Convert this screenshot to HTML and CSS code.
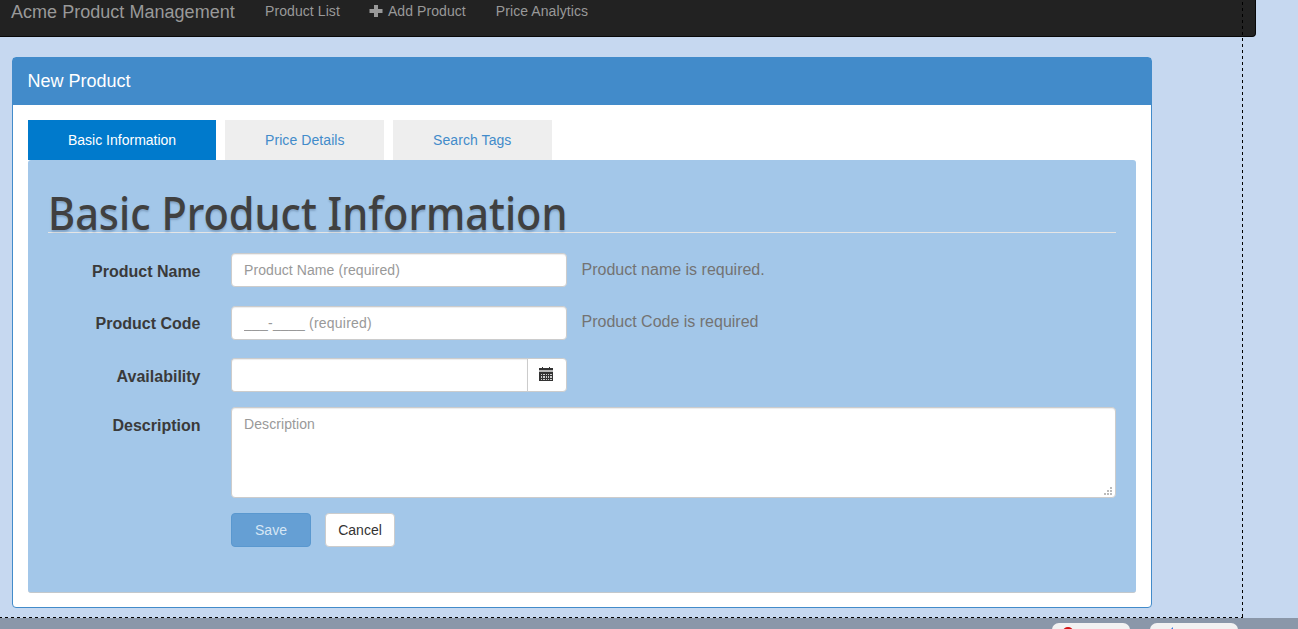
FILE: index.html
```html
<!DOCTYPE html>
<html lang="en">
<head>
<meta charset="utf-8">
<title>Acme Product Management</title>
<link rel="stylesheet" href="styles.css">
</head>
<body>
<div class="page">
  <nav class="navbar">
    <a class="brand">Acme Product Management</a>
    <a class="nav-link nav-list">Product List</a>
    <a class="nav-link nav-add"><svg class="plus" viewBox="0 0 14 14"><path d="M5 1h4v4h4.500v4H9v4H5V9H.5V5H5z"/></svg>Add Product</a>
    <a class="nav-link">Price Analytics</a>
  </nav>
  <main class="panel">
    <header class="panel-heading">New Product</header>
    <div class="panel-body">
      <div class="tabs">
        <a class="tab active">Basic Information</a>
        <a class="tab">Price Details</a>
        <a class="tab">Search Tags</a>
      </div>
      <form class="well">
        <h1 class="legend"><span class="legend-text">Basic Product Information</span></h1>
        <div class="row">
          <label class="label">Product Name</label>
          <input class="control" type="text" placeholder="Product Name (required)">
          <span class="help">Product name is required.</span>
        </div>
        <div class="row row-code">
          <label class="label">Product Code</label>
          <input class="control" type="text" placeholder="___-____ (required)">
          <span class="help">Product Code is required</span>
        </div>
        <div class="row row-date">
          <label class="label">Availability</label>
          <div class="group">
            <input class="control date" type="text">
            <button class="addon" type="button"><svg class="calendar" viewBox="0 0 14 14" shape-rendering="crispEdges"><path d="M3 0h1v1h6V0h1v1h3v2H0V1h3z"/><path class="band" d="M0 3h14v2H0z"/><path d="M0 5h14v9H0z"/><path class="cells" d="M2 7h1v1H2zM4 7h2v1H4zM7 7h1v1H7zM9 7h1v1H9zM11 7h2v1h-2zM2 9h1v2H2zM4 9h2v2H4zM7 9h1v2H7zM9 9h1v2H9zM11 9h2v2h-2zM2 12h1v1H2zM4 12h2v1H4zM7 12h1v1H7zM9 12h1v1H9zM11 12h2v1h-2z"/></svg></button>
          </div>
        </div>
        <div class="row row-desc">
          <label class="label">Description</label>
          <div class="area-wrap">
            <textarea class="control area" placeholder="Description"></textarea>
            <svg class="grip" viewBox="0 0 8 8"><path d="M6 0h2v2H6zM3 3h2v2H3zM6 3h2v2H6zM0 6h2v2H0zM3 6h2v2H3zM6 6h2v2H6z"/></svg>
          </div>
        </div>
        <div class="actions">
          <button class="btn save" type="button">Save</button>
          <button class="btn cancel" type="button">Cancel</button>
        </div>
      </form>
    </div>
  </main>
  <div class="guide"></div>
</div>
<footer class="toolbar">
  <div class="tool tool-a"><svg class="tool-icon" viewBox="0 0 10 4"><path fill="#d31313" d="M0 4a5 4 0 0 1 10 0z"/></svg></div>
  <div class="tool tool-b"><svg class="tool-icon" viewBox="0 0 10 4"><path fill="#3b7de0" d="M3 4l1-2 2-2v4z"/></svg></div>
</footer>
</body>
</html>
```
FILE: styles.css
```css
* { box-sizing: border-box; }
body {
  margin: 0;
  width: 1298px;
  height: 629px;
  overflow: hidden;
  background: #c6d8f0;
  color: #333;
  font: 14px/20px "Liberation Sans", Arial, sans-serif;
}
.page { position: relative; height: 618px; }
.navbar {
  display: flex;
  align-items: flex-start;
  width: 1256px;
  height: 37px;
  padding-left: 11px;
  background: #222;
  border: solid #080808;
  border-width: 0 1px 1px 0;
  border-radius: 0 0 4px 0;
  color: #999;
}
.brand { width: 254px; padding-top: 2px; font-size: 18px; white-space: nowrap; letter-spacing: .03px; }
.nav-link { padding-top: 1px; margin-right: 30px; white-space: nowrap; letter-spacing: .08px; }
.nav-list { margin-right: 29px; }
.plus { width: 14px; height: 14px; margin: 0 5px -1.500px 0; fill: #999; }
.panel {
  width: 1140px;
  height: 551px;
  margin: 20px 0 0 12px;
  background: #fff;
  border: 1px solid #428bca;
  border-radius: 4px;
}
.panel-heading {
  height: 47px;
  padding: 13px 14.500px;
  background: #428bca;
  color: #fff;
  font-size: 18px;
  line-height: 20px;
}
.panel-body { padding: 15px; }
.tabs { display: flex; gap: 9px; }
.tab {
  height: 40px;
  padding: 0 40px;
  background: #eee;
  color: #428bca;
  line-height: 40px;
  width: 159px;
  white-space: nowrap;
  letter-spacing: .08px;
}
.tab.active { width: 188px; background: #007acc; color: #fff; letter-spacing: 0; }
.well {
  height: 433px;
  padding: 20px;
  background: #a3c7e9;
  border-bottom: 1px solid #c3c8cc;
  border-radius: 3px;
}
.legend {
  height: 53px;
  margin: 0 0 20px;
  border-bottom: 1px solid #e5e5e5;
  color: #404040;
  font: 500 45px/66px "Comic Sans MS", "Noto Sans", sans-serif;
  text-shadow: 0 2px 2px rgba(80, 110, 145, .4);
  white-space: nowrap;
}
.legend-text { display: inline-block; transform: scaleX(.922); transform-origin: 0 0; }
.row { display: flex; height: 34px; margin-bottom: 19px; }
.row-code { margin-bottom: 18px; }
.row-date { margin-bottom: 15px; }
.row-desc { height: 91px; margin-bottom: 15px; }
.label {
  width: 152.500px;
  margin-right: 30.500px;
  padding-top: 9px;
  text-align: right;
  font-size: 16px;
  font-weight: bold;
  color: #3a3a3a;
}
.row-code .label { padding-top: 8px; }
.control {
  width: 336px;
  height: 34px;
  margin: 0;
  padding: 6px 12px;
  border: 1px solid #ccc;
  border-radius: 4px;
  background: #fff;
  box-shadow: inset 0 1px 1px rgba(0, 0, 0, .075);
  font: inherit;
  outline: 0;
}
.control::placeholder { color: #999; opacity: 1; letter-spacing: .08px; }
.row-code .control::placeholder { letter-spacing: .22px; }
.help { margin-left: 14.500px; padding-top: 7px; font-size: 16px; color: #737373; }
.row-code .help { padding-top: 6px; }
.group { display: flex; }
.date { width: 296px; border-radius: 4px 0 0 4px; border-right: 0; }
.addon {
  width: 40px;
  padding: 0 2px 2px 0;
  border: 1px solid #ccc;
  border-radius: 0 4px 4px 0;
  background: #fff;
}
.calendar { display: block; width: 14px; height: 14px; margin: 0 auto; fill: #333; }
.band { fill: #b8b8b8; }
.cells { fill: #ccc; }
.area-wrap { position: relative; }
.area { display: block; width: 885px; height: 91px; resize: none; }
.grip { position: absolute; right: 4px; bottom: 3px; width: 8px; height: 8px; fill: #bbb; }
.actions { display: flex; gap: 14px; margin-left: 183px; }
.btn { height: 34px; padding: 0; border: 1px solid #ccc; border-radius: 4px; background: #fff; color: #333; font: inherit; }
.save { width: 80px; background: #659fd4; border-color: #5a98cf; color: #d6e6f4; }
.cancel { width: 70px; }
.guide {
  position: absolute;
  top: 0;
  left: 0;
  width: 1243px;
  height: 618px;
  background:
    repeating-linear-gradient(90deg, #000 0 2px, #0000 2px 5px, #000 5px 6px) 0 100% / 100% 1px no-repeat,
    repeating-linear-gradient(#0000 0 2px, #000 2px 5px, #0000 5px 6px) 100% 0 / 1px 100% no-repeat;
  pointer-events: none;
}
.toolbar { display: flex; height: 11px; padding: 5px 0 0 1052px; gap: 20px; background: #8a97a9; overflow: hidden; }
.tool { height: 20px; border-radius: 7px; background: #f2f2f2; }
.tool-a { width: 78px; padding-left: 11px; }
.tool-b { width: 88px; padding-left: 17px; }
.tool-icon { display: block; width: 10px; height: 4px; margin-top: 4px; }
```
